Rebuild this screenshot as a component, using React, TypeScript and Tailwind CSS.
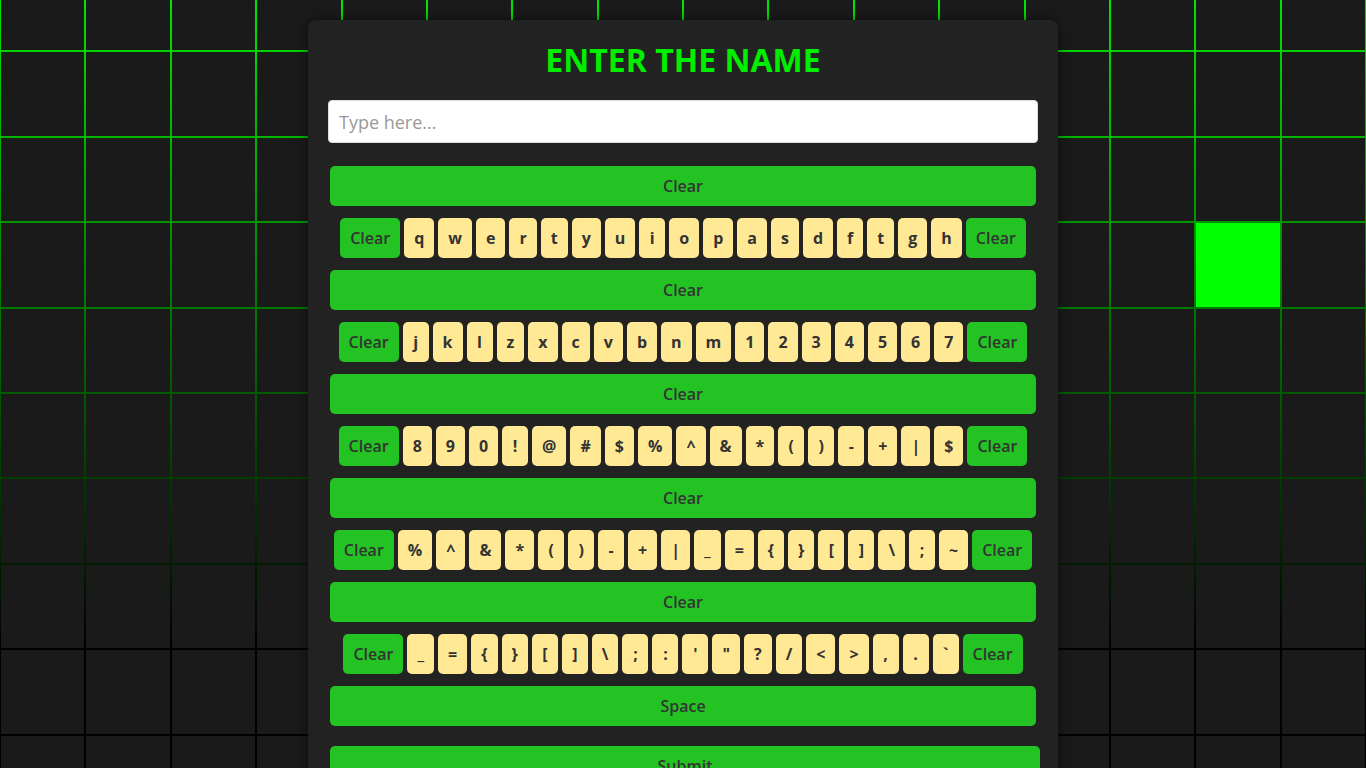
import React from "react";

const rows: string[][] = [
  ["q", "w", "e", "r", "t", "y", "u", "i", "o", "p", "a", "s", "d", "f", "t", "g", "h"],
  ["j", "k", "l", "z", "x", "c", "v", "b", "n", "m", "1", "2", "3", "4", "5", "6", "7"],
  ["8", "9", "0", "!", "@", "#", "$", "%", "^", "&", "*", "(", ")", "-", "+", "|", "$"],
  ["%", "^", "&", "*", "(", ")", "-", "+", "|", "_", "=", "{", "}", "[", "]", "\\", ";", "~"],
  ["_", "=", "{", "}", "[", "]", "\\", ";", ":", "'", '"', "?", "/", "<", ">", ",", ".", "`"],
];

const COLS = 16;
const ROWS = 10;

function Background() {
  const cells = [];
  for (let r = 0; r < ROWS; r++) {
    for (let c = 0; c < COLS; c++) {
      const lit = r === 3 && c === 14;
      cells.push(
        <div
          key={`${r}-${c}`}
          className={lit ? "m-px h-[83.4px] bg-[#00ff00]" : "m-px h-[83.4px] bg-[#1a1a1a]"}
        />
      );
    }
  }
  return (
    <div className="pointer-events-none absolute inset-0 overflow-hidden">
      <div className="-mt-[34px] grid grid-cols-16 bg-[linear-gradient(to_bottom,#00f000_0%,#000_80%,#000_100%)]">
        {cells}
      </div>
    </div>
  );
}

function Key({ label }: { label: string }) {
  return (
    <button className="mx-[2px] h-10 min-w-[26px] rounded-[5px] bg-[#ffe994] px-[10px] text-[16px] font-bold text-[#333]">
      {label}
    </button>
  );
}

function ClearKey() {
  return (
    <button className="mx-[2px] h-10 rounded-[5px] bg-[#22c322] px-[10px] text-[16px] font-semibold text-[#333]">
      Clear
    </button>
  );
}

function Bar({ label }: { label: string }) {
  return (
    <button className="mx-[2px] h-10 rounded-[5px] bg-[#22c322] text-[16px] font-semibold text-[#333]">
      {label}
    </button>
  );
}

export default function App() {
  return (
    <div className="relative h-screen overflow-hidden bg-[#1a1a1a] font-['Open_Sans',sans-serif]">
      <Background />
      <div className="relative z-10 mx-auto mt-5 w-[750px] rounded-lg bg-[#222] p-5 pb-10 shadow-[0_0_12px_rgba(0,0,0,0.5)]">
        <h1 className="text-center text-[32px] leading-10 font-bold text-[#00ee00]">ENTER THE NAME</h1>
        <input
          type="text"
          placeholder="Type here..."
          className="mt-5 block h-[43px] w-full rounded-[4px] border border-[#ddd] bg-white px-[10px] text-[18px] text-[#333] placeholder:text-[#999] outline-none"
        />
        <div className="mt-[23px] flex flex-col gap-3">
          {rows.map((row, i) => (
            <React.Fragment key={i}>
              <Bar label="Clear" />
              <div className="flex justify-center">
                <ClearKey />
                {row.map((k, j) => (
                  <Key key={j} label={k} />
                ))}
                <ClearKey />
              </div>
            </React.Fragment>
          ))}
          <Bar label="Space" />
        </div>
        <button className="mt-5 ml-[2px] h-10 w-full rounded-[5px] bg-[#22c322] text-[16px] font-semibold text-[#333]">
          Submit
        </button>
      </div>
    </div>
  );
}
